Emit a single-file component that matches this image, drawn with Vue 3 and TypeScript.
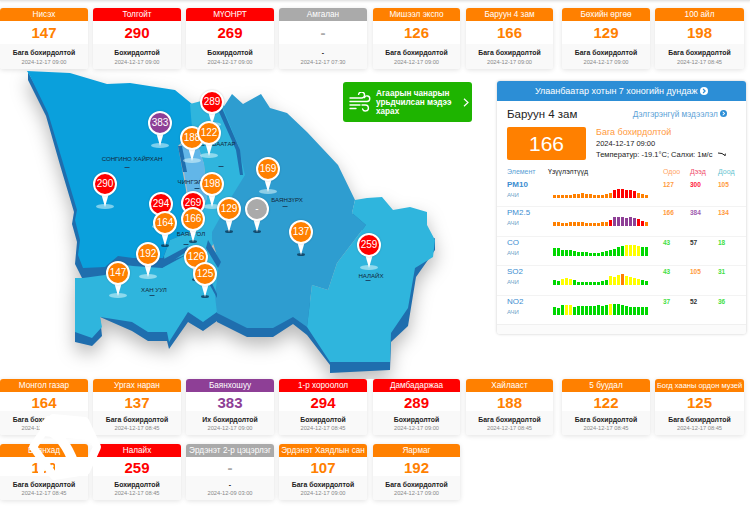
<script setup lang="ts">
interface Station { name: string; aqi: string; level: string; status: string; date: string }
interface Pin { x: number; y: number; aqi: string; level: string; dark?: boolean }
interface Pollutant { name: string; now: number; max: number; min: number; bars: [number, string][] }

const LOW = 'Бага бохирдолтой'
const MID = 'Бохирдолтой'

const topRow: Station[] = [
  { name: 'Нисэх', aqi: '147', level: 'orange', status: LOW, date: '2024-12-17 09:00' },
  { name: 'Толгойт', aqi: '290', level: 'red', status: MID, date: '2024-12-17 09:00' },
  { name: 'МҮОНРТ', aqi: '269', level: 'red', status: MID, date: '2024-12-17 09:00' },
  { name: 'Амгалан', aqi: '-', level: 'gray', status: '-', date: '2024-12-17 07:30' },
  { name: 'Мишээл экспо', aqi: '126', level: 'orange', status: LOW, date: '2024-12-17 09:00' },
  { name: 'Баруун 4 зам', aqi: '166', level: 'orange', status: LOW, date: '2024-12-17 09:00' },
  { name: 'Бөхийн өргөө', aqi: '129', level: 'orange', status: LOW, date: '2024-12-17 09:00' },
  { name: '100 айл', aqi: '198', level: 'orange', status: LOW, date: '2024-12-17 08:45' },
]

const bottomRows: Station[] = [
  { name: 'Монгол газар', aqi: '164', level: 'orange', status: LOW, date: '2024-12-17 08:45' },
  { name: 'Ургах наран', aqi: '137', level: 'orange', status: LOW, date: '2024-12-17 08:45' },
  { name: 'Баянхошуу', aqi: '383', level: 'purple', status: 'Их бохирдолтой', date: '2024-12-17 09:00' },
  { name: '1-р хороолол', aqi: '294', level: 'red', status: MID, date: '2024-12-17 08:45' },
  { name: 'Дамбадаржаа', aqi: '289', level: 'red', status: MID, date: '2024-12-17 09:00' },
  { name: 'Хайлааст', aqi: '188', level: 'orange', status: LOW, date: '2024-12-17 08:45' },
  { name: '5 буудал', aqi: '122', level: 'orange', status: LOW, date: '2024-12-17 08:45' },
  { name: 'Богд хааны ордон музей', aqi: '125', level: 'orange', status: LOW, date: '2024-12-17 08:45' },
  { name: 'Баянхад', aqi: '169', level: 'orange', status: LOW, date: '2024-12-17 08:45' },
  { name: 'Налайх', aqi: '259', level: 'red', status: MID, date: '2024-12-17 08:45' },
  { name: 'Эрдэнэт 2-р цэцэрлэг', aqi: '-', level: 'gray', status: '-', date: '2024-12-09 03:00' },
  { name: 'Эрдэнэт Хаядлын сан', aqi: '107', level: 'orange', status: LOW, date: '2024-12-17 09:00' },
  { name: 'Яармаг', aqi: '192', level: 'orange', status: LOW, date: '2024-12-17 09:00' },
]

const pins: Pin[] = [
  { x: 160, y: 123, aqi: '383', level: 'purple' },
  { x: 212, y: 102, aqi: '289', level: 'red' },
  { x: 192, y: 138, aqi: '188', level: 'orange' },
  { x: 209, y: 133, aqi: '122', level: 'orange' },
  { x: 105, y: 184, aqi: '290', level: 'red' },
  { x: 212, y: 184, aqi: '198', level: 'orange' },
  { x: 268, y: 169, aqi: '169', level: 'orange' },
  { x: 161, y: 204, aqi: '294', level: 'red' },
  { x: 193, y: 203, aqi: '269', level: 'red' },
  { x: 165, y: 223, aqi: '164', level: 'orange', dark: true },
  { x: 193, y: 219, aqi: '166', level: 'orange', dark: true },
  { x: 229, y: 209, aqi: '129', level: 'orange', dark: true },
  { x: 257, y: 209, aqi: '-', level: 'gray', dark: true },
  { x: 301, y: 232, aqi: '137', level: 'orange', dark: true },
  { x: 369, y: 245, aqi: '259', level: 'red' },
  { x: 148, y: 254, aqi: '192', level: 'orange' },
  { x: 118, y: 273, aqi: '147', level: 'orange' },
  { x: 196, y: 257, aqi: '126', level: 'orange', dark: true },
  { x: 205, y: 274, aqi: '125', level: 'orange', dark: true },
]

const labels = [
  { x: 132, y: 161, dx: 127, dy: 167, text: 'СОНГИНО ХАЙРХАН' },
  { x: 218, y: 146, dx: 221, dy: 166, text: 'СҮХБААТАР' },
  { x: 196, y: 184, dx: 197, dy: 188, text: 'ЧИНГЭЛТЭЙ' },
  { x: 191, y: 236, dx: 186, dy: 244, text: 'БАЯНГОЛ' },
  { x: 287, y: 202, dx: 285, dy: 206, text: 'БАЯНЗҮРХ' },
  { x: 154, y: 292, dx: 152, dy: 295, text: 'ХАН УУЛ' },
  { x: 371, y: 278, dx: 368, dy: 280, text: 'НАЛАЙХ' },
]

// heights in px, colour switches read off the chart
function series(heights: number[], colour: (i: number) => string): [number, string][] {
  return heights.map((h, i) => [h, colour(i)])
}

const G = '#00d800'
const Y = '#ffff00'
const O = '#ff8000'
const R = '#ff0000'
const P = '#8e3f96'

const pollutants: Pollutant[] = [
  {
    name: 'PM10', now: 127, max: 300, min: 105,
    bars: series([3, 3, 3, 3, 3, 4, 4, 5, 4, 4, 3, 3, 3, 4, 5, 8, 9, 9, 8, 8, 7, 5, 4, 3],
      i => (i >= 15 && i <= 20 ? R : O)),
  },
  {
    name: 'PM2.5', now: 166, max: 384, min: 134,
    bars: series([4, 4, 3, 3, 4, 4, 4, 4, 3, 3, 3, 3, 4, 4, 6, 9, 9, 9, 8, 9, 8, 7, 5, 4],
      i => (i >= 15 && i <= 20 ? P : i === 14 || i === 21 || i === 22 ? R : O)),
  },
  {
    name: 'CO', now: 43, max: 57, min: 18,
    bars: series([8, 8, 6, 6, 6, 5, 4, 4, 4, 3, 3, 3, 4, 5, 6, 7, 9, 10, 11, 11, 11, 10, 9, 9],
      i => (i >= 18 && i <= 21 ? Y : G)),
  },
  {
    name: 'SO2', now: 43, max: 105, min: 31,
    bars: series([5, 4, 6, 7, 6, 5, 3, 3, 3, 3, 3, 3, 4, 5, 9, 8, 10, 11, 9, 8, 7, 6, 5, 4],
      i => (i === 17 ? O : (i >= 2 && i <= 4) || (i >= 14 && i <= 21) ? Y : G)),
  },
  {
    name: 'NO2', now: 37, max: 52, min: 36,
    bars: series([8, 7, 10, 10, 10, 8, 9, 9, 9, 9, 9, 10, 9, 10, 11, 11, 11, 10, 9, 8, 8, 8, 8, 8],
      i => (i === 3 || i === 4 || i === 14 ? Y : G)),
  },
]

function valueClass(v: number) {
  if (v <= 50) return 'good'
  if (v <= 100) return 'fair'
  if (v <= 200) return 'low'
  if (v <= 300) return 'high'
  return 'worst'
}
</script>

<template>
  <div class="page">
    <div class="topline"></div>

    <div class="cards top">
      <div v-for="s in topRow" :key="s.name" class="card">
        <div class="card-head" :class="s.level">{{ s.name }}</div>
        <div class="card-num" :class="'t-' + s.level">{{ s.aqi }}</div>
        <div class="card-foot">
          <div class="card-status">{{ s.status }}</div>
          <div class="card-date">{{ s.date }}</div>
        </div>
      </div>
    </div>

    <div class="middle">
      <div class="map">
        <svg class="map-svg" width="497" height="310" viewBox="0 69 497 310">
          <g class="land">
            <!-- dark extruded sides -->
            <g fill="#1f6eae">
              <path d="M28 72 L28 80 L46 116 L60 165 L74 212 L72 224 L77 242 L75 264 L83 280 L105 278 L118 266 L133 268 L162 270 L187 256 L200 250 L190 240 L100 200 Z" />
              <path d="M75 322 L75 342 L92 346 L102 336 L100 317 L132 331 L148 341 L167 341 L169 349 L188 322 L203 331 L217 321 L217 322 L247 337 L273 337 L293 324 L307 335 L330 365 L330 373 L390 370 L391 342 L408 326 L416 277 L435 250 L435 238 L400 260 L390 320 L300 300 L180 300 Z" />
              <path d="M353 212 L367 222 L364 231 L351 222 Z" />
            </g>
            <!-- Сонгинохайрхан -->
            <path fill="#0aa0dc" d="M27 71 L70 73 L107 84 L130 83 L175 90 L192 104 L194 130 L178 146 L186 190 L190 232 L170 240 L163 258 L133 258 L118 256 L105 267 L83 268 L78 255 L80 240 L75 220 L77 210 L63 163 L48 113 L30 76 Z" />
            <!-- Хан-Уул -->
            <path fill="#2fb5dd" d="M75 278 L83 278 L105 275 L118 264 L133 266 L162 268 L188 254 L210 246 L225 262 L225 305 L217 312 L203 322 L188 312 L169 342 L167 332 L148 332 L132 322 L100 317 L102 327 L92 338 L75 332 Z" />
            <!-- Сүхбаатар -->
            <path fill="#2fb5dd" d="M190 104 L205 100 L225 106 L245 165 L248 182 L216 240 L212 246 L192 236 L207 198 L204 164 L192 128 Z" />
            <!-- Баянзүрх -->
            <path fill="#2e9dd0" d="M223 108 L232 94 L243 104 L261 94 L270 108 L287 113 L307 132 L338 165 L355 200 L352 213 L366 225 L337 263 L328 290 L312 285 L307 327 L293 317 L273 328 L247 328 L217 313 L215 296 L219 262 L212 240 L212 232 L232 196 L245 175 L238 145 Z" />
            <!-- Налайх -->
            <path fill="#2fb5dd" d="M355 200 L367 198 L382 197 L393 210 L410 207 L427 212 L427 225 L435 240 L433 257 L415 268 L408 308 L391 333 L390 362 L330 362 L307 327 L312 285 L328 290 L337 263 L366 225 L352 213 Z" />
            <!-- Чингэлтэй -->
            <path fill="#62b6e8" d="M180 146 L192 128 L204 164 L207 198 L196 220 L188 195 L184 172 Z" />
            <!-- Баянгол -->
            <path fill="#2fb5dd" d="M170 240 L190 232 L212 236 L212 246 L200 250 L188 254 L165 263 L164 256 Z" />
            <!-- inner steps -->
            <g fill="#1f6eae">
              <path d="M178 146 L182 146 L187 172 L183 172 Z" />
              <path d="M222 108 L240 150 L243 175 L240 175 L236 150 L219 112 Z" />
              <path d="M162 260 L188 246 L186 252 L162 268 Z" />
              <path d="M208 240 L221 262 L218 268 L206 248 Z" />
              <path d="M208 275 L217 294 L217 298 L206 278 Z" />
            </g>
          </g>
          <g v-for="l in labels" :key="l.text">
            <text class="map-label" :x="l.x" :y="l.y" text-anchor="middle">{{ l.text }}</text>
            <rect :x="l.dx - 2.5" :y="l.dy" width="5" height="1" fill="#1b4a6b" />
          </g>
        </svg>

        <div
          v-for="p in pins"
          :key="p.aqi + p.x"
          class="pin"
          :style="{ left: p.x + 'px', top: p.y - 69 + 'px' }"
        >
          <span class="pin-spot" :class="{ dark: p.dark }"></span>
          <span class="pin-tail"></span>
          <span class="pin-head" :class="p.level">{{ p.aqi }}</span>
        </div>

        <a class="forecast">
          <svg class="wind" width="22" height="21" viewBox="0 0 22 21" fill="none" stroke="#fff" stroke-width="1.4" stroke-linecap="round">
            <path d="M1 6 H12.5 A3 3 0 1 0 9.6 2.4" />
            <path d="M1 9.5 H18 A2.8 2.8 0 1 0 15.4 5.6" />
            <path d="M1 13 H11" />
            <path d="M1 16.5 H7" />
            <path d="M13 13 H16.5 A3 3 0 1 1 13.6 17" />
          </svg>
          <span class="forecast-text">Агаарын чанарын урьдчилсан мэдээ харах</span>
          <svg class="chev" width="6" height="9" viewBox="0 0 6 9" fill="none" stroke="#fff" stroke-width="1.2">
            <path d="M1 .8 L5 4.5 L1 8.2" />
          </svg>
        </a>
      </div>

      <div class="panel">
        <div class="panel-head">
          Улаанбаатар хотын 7 хоногийн дундаж
          <svg class="go" width="8" height="8" viewBox="0 0 8 8">
            <circle cx="4" cy="4" r="4" fill="#fff" />
            <path d="M3.1 2 L5.1 4 L3.1 6" fill="none" stroke="#2c8ed6" stroke-width="1.2" />
          </svg>
        </div>
        <div class="panel-title">
          <span class="station">Баруун 4 зам</span>
          <span class="more">
            Дэлгэрэнгүй мэдээлэл
            <svg class="go" width="7" height="7" viewBox="0 0 8 8">
              <circle cx="4" cy="4" r="4" fill="#2c8ed6" />
              <path d="M3.1 2 L5.1 4 L3.1 6" fill="none" stroke="#fff" stroke-width="1.2" />
            </svg>
          </span>
        </div>
        <div class="summary">
          <div class="big-aqi">166</div>
          <div class="info">
            <div class="info-status">Бага бохирдолтой</div>
            <div>2024-12-17 09:00</div>
            <div>
              Температур: -19.1°C; Салхи: 1м/с
              <svg class="arrow" width="8" height="5" viewBox="0 0 8 5" fill="none" stroke="#222" stroke-width="1">
                <path d="M0 1 L4 1.5 L7 3.5 M7.4 1.6 L7 4" />
              </svg>
            </div>
          </div>
        </div>
        <div class="table-head">
          <span class="th-el">Элемент</span>
          <span class="th-ind">Үзүүлэлтүүд</span>
          <span class="th-now">Одоо</span>
          <span class="th-max">Дээд</span>
          <span class="th-min">Доод</span>
        </div>
        <div v-for="(row, ri) in pollutants" :key="row.name" class="row" :class="{ first: ri === 0 }">
          <div class="el">
            <div class="el-name">{{ row.name }}</div>
            <div class="el-unit">АЧИ</div>
          </div>
          <div class="bars">
            <i
              v-for="(b, i) in row.bars"
              :key="i"
              :style="{ height: b[0] + 'px', background: b[1] }"
            ></i>
          </div>
          <span class="val" :class="valueClass(row.now)">{{ row.now }}</span>
          <span class="val" :class="valueClass(row.max)">{{ row.max }}</span>
          <span class="val" :class="valueClass(row.min)">{{ row.min }}</span>
        </div>
        <div class="panel-foot"></div>
      </div>
    </div>

    <div class="cards">
      <div v-for="s in bottomRows" :key="s.name" class="card">
        <div class="card-head" :class="[s.level, { tight: s.name.length > 20 }]">{{ s.name }}</div>
        <div class="card-num" :class="'t-' + s.level">{{ s.aqi }}</div>
        <div class="card-foot">
          <div class="card-status">{{ s.status }}</div>
          <div class="card-date">{{ s.date }}</div>
        </div>
      </div>
    </div>

    <svg class="badge" width="80" height="72" viewBox="27 412 80 72" fill="none" stroke="#fff" stroke-linejoin="round">
      <path d="M53 418 L85 421 L97 447 L86 471 L54 476 L33 447 Z" stroke-width="8" />
      <path d="M47 416 L85 420 L90 440 L40 436 L40 424 Z" fill="#fff" stroke="none" />
      <path d="M52 432 C62 438 70 450 76 470" stroke-width="10" />
      <path d="M55 460 L90 460 L84 474 L55 478 Z" fill="#fff" stroke="none" />
      <path d="M41 458 L41 474" stroke-width="6" />
    </svg>
  </div>
</template>

<style scoped>
.page {
  position: relative;
  width: 750px;
  height: 508px;
  overflow: hidden;
  background: #fff;
  font-family: "Liberation Sans", Arial, sans-serif;
  color: #222;
}

.topline {
  height: 1px;
  background: #e6e6e6;
  box-shadow: 0 1px 2px rgba(0, 0, 0, 0.12);
  margin-bottom: 7px;
}

.cards {
  display: flex;
  flex-wrap: wrap;
  row-gap: 9px;
  width: 750px;
}

.card {
  width: 88px;
  margin-right: 5px;
  height: 56px;
  border-radius: 3px;
  overflow: hidden;
  box-shadow: 0 1px 5px rgba(0, 0, 0, 0.12);
  text-align: center;
  background: #fff;
}
.card:nth-child(8n + 4) { margin-right: 6px; }
.card:nth-child(8n + 5) { width: 87px; margin-right: 6px; }
.card:nth-child(8n + 6) { width: 87px; margin-right: 9px; }
.card:nth-child(8n) { width: 89px; margin-right: 0; }

.top .card { height: 61px; }

.card-head {
  height: 13px;
  line-height: 13px;
  font-size: 8.2px;
  color: #fff;
  white-space: nowrap;
}
.card-head.tight { font-size: 7.5px; }

.orange { background: #ff8000; }
.red { background: #ff0000; }
.purple { background: #8e3f96; }
.gray { background: #aaaaaa; }

.t-orange { color: #ff8000; }
.t-red { color: #ff0000; }
.t-purple { color: #8e3f96; }
.t-gray { color: #aaaaaa; }

.card-num {
  height: 19px;
  line-height: 22px;
  font-size: 15px;
  font-weight: 700;
}
.top .card-num {
  height: 23px;
  line-height: 23px;
}

.card-foot {
  height: 24px;
  background: #f9f9f9;
  padding-top: 4px;
  box-sizing: border-box;
}
.top .card-foot { height: 25px; }

.card-status {
  font-size: 6.9px;
  line-height: 9px;
  font-weight: 700;
  color: #222;
}
.card-date {
  font-size: 5.7px;
  line-height: 9px;
  color: #888;
}
.top .card-date { margin-top: 1px; }

.middle {
  display: flex;
  height: 310px;
}

.map {
  position: relative;
  width: 497px;
  height: 310px;
  flex: none;
}
.map-svg { display: block; }
.land { filter: drop-shadow(0 8px 9px rgba(0, 0, 0, 0.28)); }
.map-label {
  font-family: "Liberation Sans", Arial, sans-serif;
  font-size: 6.1px;
  fill: #12283a;
}

.pin {
  position: absolute;
  width: 0;
  height: 0;
}
.pin-head {
  position: absolute;
  left: -12px;
  top: -12px;
  width: 24px;
  height: 24px;
  box-sizing: border-box;
  border: 2px solid #fff;
  border-radius: 50%;
  font-size: 10px;
  line-height: 20px;
  text-align: center;
  color: #fff;
  box-shadow: 0 0 2px rgba(0, 0, 0, 0.2);
}
.pin-tail {
  position: absolute;
  left: -4px;
  top: 9px;
  width: 0;
  height: 0;
  border-left: 4px solid transparent;
  border-right: 4px solid transparent;
  border-top: 14px solid #fff;
}
.pin-spot {
  position: absolute;
  left: -9px;
  top: 20px;
  width: 18px;
  height: 5px;
  border-radius: 50%;
  background: rgba(220, 245, 250, 0.55);
}
.pin-spot.dark {
  left: -4px;
  width: 8px;
  height: 3px;
  top: 21px;
  background: rgba(10, 50, 80, 0.75);
}

.forecast {
  position: absolute;
  left: 343px;
  top: 13px;
  width: 129px;
  height: 40px;
  box-sizing: border-box;
  display: flex;
  align-items: center;
  padding-left: 6px;
  background: #1eb400;
  border-radius: 3px;
  color: #fff;
}
.wind { flex: none; }
.forecast-text {
  width: 84px;
  margin-left: 5px;
  font-size: 8.2px;
  line-height: 9px;
  font-weight: 700;
}
.chev { flex: none; margin-left: 3px; }

.panel {
  width: 249px;
  height: 253px;
  margin-top: 12px;
  border-radius: 3px;
  box-shadow: 0 0 3px rgba(0, 0, 0, 0.22);
  display: flex;
  flex-direction: column;
  overflow: hidden;
}

.panel-head {
  height: 20px;
  line-height: 20px;
  background: #2c8ed6;
  color: #fff;
  font-size: 9px;
  text-align: center;
}
.go { vertical-align: -0.5px; }

.panel-title {
  display: flex;
  justify-content: space-between;
  align-items: center;
  height: 26px;
  padding: 0 19px 0 10px;
}
.station { font-size: 11.5px; color: #222; }
.more { font-size: 8.2px; color: #5b9fd6; }

.summary {
  display: flex;
  padding-left: 10px;
}
.big-aqi {
  width: 79px;
  height: 33px;
  line-height: 33px;
  background: #ff8000;
  border-radius: 2px;
  color: #fff;
  font-size: 21px;
  text-align: center;
}
.info {
  margin-left: 10px;
  font-size: 7.5px;
  line-height: 11px;
  color: #222;
  white-space: nowrap;
}
.info-status {
  font-size: 9px;
  color: #ff9a40;
}
.arrow { margin-left: 3px; }

.table-head {
  position: relative;
  height: 14px;
  margin-top: 5px;
  font-size: 7px;
  line-height: 14px;
}
.table-head span { position: absolute; top: 0; }
.th-el { left: 10px; color: #5b9fd6; }
.th-ind { left: 51px; color: #222; }
.th-now { left: 166px; color: #ffa566; }
.th-max { left: 193px; color: #f0506e; }
.th-min { left: 221px; color: #66c4d0; }

.row {
  display: grid;
  grid-template-columns: 46px 110px 27px 28px 1fr;
  height: 29.5px;
  padding-left: 10px;
  box-sizing: border-box;
  border-top: 1px solid #f3f3f3;
}
.row.first {
  height: 27px;
  border-top: none;
}

.el-name {
  font-size: 8px;
  line-height: 11px;
  color: #3b8dd0;
}
.first .el-name { font-weight: 700; }
.el-unit {
  font-size: 6px;
  line-height: 10px;
  color: #6f9fc8;
}

.bars {
  display: flex;
  align-items: flex-end;
  gap: 1px;
  height: 19px;
  width: 96px;
}
.bars i {
  display: block;
  width: 3px;
}

.val {
  font-size: 6.5px;
  line-height: 11px;
  font-weight: 700;
}
.val.good { color: #44e044; }
.val.fair { color: #333; }
.val.low { color: #ff9a40; }
.val.high { color: #ff2040; }
.val.worst { color: #a060b0; }

.panel-foot {
  flex: 1;
  border-top: 1px solid #f0f0f0;
  background: #fbfbfb;
}

.badge {
  position: absolute;
  left: 27px;
  top: 412px;
}
</style>
